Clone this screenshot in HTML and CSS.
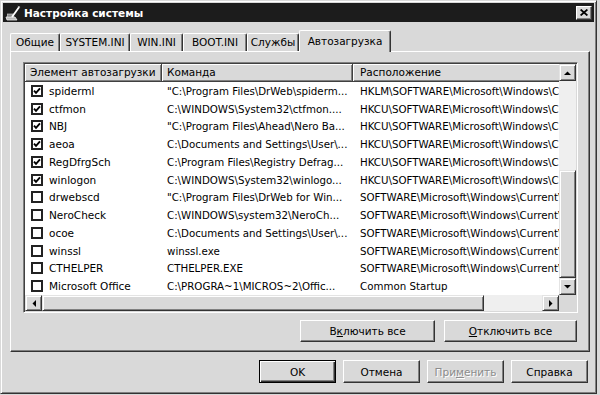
FILE: index.html
```html
<!DOCTYPE html>
<html lang="ru">
<head>
<meta charset="utf-8">
<title>Настройка системы</title>
<link rel="stylesheet" href="styles.css">
</head>
<body>
<div class="window">
  <div class="titlebar">
    <svg class="appicon" viewBox="0 0 16 16" width="16" height="16">
      <path d="M1 12 L10 12 L12 15 L2 15 Z" fill="#b8b8b8" stroke="#eee" stroke-width="0.8"/>
      <rect x="2.5" y="9" width="6" height="3" fill="#8a8a8a" stroke="#ddd" stroke-width="0.6"/>
      <path d="M7 12 L14.5 1.5" stroke="#fff" stroke-width="1.8"/>
      <path d="M12.8 1.2 L15 3" stroke="#aaa" stroke-width="1"/>
    </svg>
    <span class="title">Настройка системы</span>
    <span class="close">
      <svg viewBox="0 0 8 7" width="8" height="7"><path d="M0.6 0.5 L7.4 6.5 M7.4 0.5 L0.6 6.5" stroke="#000" stroke-width="1.7" fill="none"/></svg>
    </span>
  </div>
  <div class="content">
    <div class="tabs">
      <div class="tab w1">Общие</div>
      <div class="tab w2">SYSTEM.INI</div>
      <div class="tab w3">WIN.INI</div>
      <div class="tab w4">BOOT.INI</div>
      <div class="tab w5">Службы</div>
      <div class="tab active">Автозагрузка</div>
    </div>
    <div class="panel">
      <div class="listview">
        <div class="table">
          <div class="hdr c1">Элемент автозагрузки</div>
          <div class="hdr c2">Команда</div>
          <div class="hdr c3">Расположение</div>

          <div class="cell c1"><span class="chk on"><svg viewBox="0 0 8 8"><polyline points="1,3.6 3,5.8 7,1.4"/></svg></span>spiderml</div>
          <div class="cell c2">"C:\Program Files\DrWeb\spiderm...</div>
          <div class="cell c3">HKLM\SOFTWARE\Microsoft\Windows\CurrentVersion\Run</div>

          <div class="cell c1"><span class="chk on"><svg viewBox="0 0 8 8"><polyline points="1,3.6 3,5.8 7,1.4"/></svg></span>ctfmon</div>
          <div class="cell c2">C:\WINDOWS\System32\ctfmon....</div>
          <div class="cell c3">HKCU\SOFTWARE\Microsoft\Windows\CurrentVersion\Run</div>

          <div class="cell c1"><span class="chk on"><svg viewBox="0 0 8 8"><polyline points="1,3.6 3,5.8 7,1.4"/></svg></span>NBJ</div>
          <div class="cell c2">"C:\Program Files\Ahead\Nero Ba...</div>
          <div class="cell c3">HKCU\SOFTWARE\Microsoft\Windows\CurrentVersion\Run</div>

          <div class="cell c1"><span class="chk on"><svg viewBox="0 0 8 8"><polyline points="1,3.6 3,5.8 7,1.4"/></svg></span>aeoa</div>
          <div class="cell c2">C:\Documents and Settings\User\...</div>
          <div class="cell c3">HKCU\SOFTWARE\Microsoft\Windows\CurrentVersion\Run</div>

          <div class="cell c1"><span class="chk on"><svg viewBox="0 0 8 8"><polyline points="1,3.6 3,5.8 7,1.4"/></svg></span>RegDfrgSch</div>
          <div class="cell c2">C:\Program Files\Registry Defrag...</div>
          <div class="cell c3">HKCU\SOFTWARE\Microsoft\Windows\CurrentVersion\Run</div>

          <div class="cell c1"><span class="chk on"><svg viewBox="0 0 8 8"><polyline points="1,3.6 3,5.8 7,1.4"/></svg></span>winlogon</div>
          <div class="cell c2">C:\WINDOWS\System32\winlogo...</div>
          <div class="cell c3">HKCU\SOFTWARE\Microsoft\Windows\CurrentVersion\Run</div>

          <div class="cell c1"><span class="chk"></span>drwebscd</div>
          <div class="cell c2">"C:\Program Files\DrWeb for Win...</div>
          <div class="cell c3">SOFTWARE\Microsoft\Windows\CurrentVersion\Run</div>

          <div class="cell c1"><span class="chk"></span>NeroCheck</div>
          <div class="cell c2">C:\WINDOWS\system32\NeroCh...</div>
          <div class="cell c3">SOFTWARE\Microsoft\Windows\CurrentVersion\Run</div>

          <div class="cell c1"><span class="chk"></span>ocoe</div>
          <div class="cell c2">C:\Documents and Settings\User\...</div>
          <div class="cell c3">SOFTWARE\Microsoft\Windows\CurrentVersion\Run</div>

          <div class="cell c1"><span class="chk"></span>winssl</div>
          <div class="cell c2">winssl.exe</div>
          <div class="cell c3">SOFTWARE\Microsoft\Windows\CurrentVersion\Run</div>

          <div class="cell c1"><span class="chk"></span>CTHELPER</div>
          <div class="cell c2">CTHELPER.EXE</div>
          <div class="cell c3">SOFTWARE\Microsoft\Windows\CurrentVersion\Run</div>

          <div class="cell c1"><span class="chk"></span>Microsoft Office</div>
          <div class="cell c2">C:\PROGRA~1\MICROS~2\Offic...</div>
          <div class="cell c3">Common Startup</div>
        </div>
        <div class="vscroll">
          <div class="sbtn"><svg viewBox="0 0 7 4" width="7" height="4"><polygon points="0,4 7,4 3.5,0.5"/></svg></div>
          <div class="track vtrack"></div>
          <div class="thumb vthumb"></div>
          <div class="sbtn"><svg viewBox="0 0 7 4" width="7" height="4"><polygon points="0,0 7,0 3.5,3.5"/></svg></div>
        </div>
        <div class="hscroll">
          <div class="sbtn"><svg viewBox="0 0 4 7" width="4" height="7"><polygon points="4,0 4,7 0.5,3.5"/></svg></div>
          <div class="thumb hthumb"></div>
          <div class="track htrack"></div>
          <div class="sbtn"><svg viewBox="0 0 4 7" width="4" height="7"><polygon points="0,0 0,7 3.5,3.5"/></svg></div>
        </div>
        <div class="corner"></div>
      </div>
      <div class="panel-buttons">
        <button class="btn wide1">В<u>к</u>лючить все</button>
        <button class="btn wide2"><u>О</u>тключить все</button>
      </div>
    </div>
    <div class="dialog-buttons">
      <button class="btn dlg default">OK</button>
      <button class="btn dlg">Отмена</button>
      <button class="btn dlg disabled">При<u>м</u>енить</button>
      <button class="btn dlg">Справка</button>
    </div>
  </div>
</div>
</body>
</html>
```
FILE: styles.css
```css
html, body {
  margin: 0;
  padding: 0;
  background: #d9d9d9;
}

body {
  font-family: "DejaVu Sans", "Liberation Sans", sans-serif;
  font-size: 10.5px;
  color: #000;
}

.window {
  width: 597px;
  height: 394px;
  box-sizing: border-box;
  border: 1px solid;
  border-color: #d9d9d9 #333 #333 #d9d9d9;
  box-shadow: inset 1px 1px #fff, inset -1px -1px #808080;
  padding: 2px;
  background: #d9d9d9;
  display: flex;
  flex-direction: column;
}

/* title bar */
.titlebar {
  height: 19px;
  background: #1c1c1c;
  display: flex;
  align-items: center;
  padding-left: 2px;
}

.appicon {
  flex: none;
}

.title {
  margin-left: 3px;
  color: #fff;
  font-weight: bold;
  font-size: 10.5px;
  flex: 1;
}

.close {
  width: 16px;
  height: 14px;
  box-sizing: border-box;
  margin-right: 2px;
  background: #d9d9d9;
  border: 1px solid;
  border-color: #fff #333 #333 #fff;
  box-shadow: inset -1px -1px #808080;
  display: flex;
  align-items: center;
  justify-content: center;
}

.close svg {
  display: block;
}

/* content */
.content {
  padding: 8px 4px 0 7px;
  display: flex;
  flex-direction: column;
}

.tabs {
  height: 21px;
  display: flex;
  align-items: flex-end;
}

.tab {
  height: 18px;
  box-sizing: border-box;
  border-top: 1px solid #fff;
  border-left: 1px solid #fff;
  border-right: 1px solid #333;
  box-shadow: inset -1px 0 #808080;
  border-radius: 2px 2px 0 0;
  text-align: center;
  line-height: 17px;
  white-space: nowrap;
}

.w1 { width: 50px; }
.w2 { width: 70px; }
.w3 { width: 53px; }
.w4 { width: 64px; }
.w5 { width: 52px; }

.tab.active {
  width: 92px;
  height: 22px;
  margin-bottom: -1px;
  line-height: 20px;
  background: #d9d9d9;
  position: relative;
  z-index: 1;
}

.panel {
  width: 580px;
  height: 301px;
  box-sizing: border-box;
  border: 1px solid;
  border-color: #fff #333 #333 #fff;
  box-shadow: inset -1px -1px #808080;
  padding: 10px 11px 0 12px;
}

/* list view */
.listview {
  width: 555px;
  height: 251px;
  box-sizing: border-box;
  border: 1px solid;
  border-color: #808080 #fff #fff #808080;
  box-shadow: inset 1px 1px #404040, inset -1px -1px #d9d9d9;
  padding: 1px;
  display: grid;
  grid-template-columns: 534px 17px;
  grid-template-rows: 231px 16px;
  background: #fff;
}

.table {
  overflow: hidden;
  display: grid;
  grid-template-columns: 137px 191px 320px;
  grid-template-rows: 18px repeat(12, 17.75px);
  background: #fff;
}

.hdr {
  box-sizing: border-box;
  background: #d9d9d9;
  border-right: 1px solid #404040;
  border-bottom: 1px solid #404040;
  box-shadow: inset 1px 1px #fff, inset -1px -1px #808080;
  line-height: 17px;
  padding-left: 5px;
  white-space: nowrap;
  overflow: hidden;
}

.hdr.c3 {
  padding-left: 7px;
}

.cell {
  font-size: 10.25px;
  white-space: nowrap;
  overflow: hidden;
  display: flex;
  align-items: center;
  padding-left: 5px;
}

.cell.c1 {
  font-size: 10.5px;
  padding-left: 6px;
  gap: 6px;
}

.cell.c3 {
  padding-left: 7px;
}

.chk {
  flex: none;
  width: 12px;
  height: 12px;
  box-sizing: border-box;
  border: 2px solid #222;
  background: #fff;
  display: flex;
}

.chk svg {
  width: 8px;
  height: 8px;
  fill: none;
  stroke: #000;
  stroke-width: 1.9;
}

/* scrollbars */
.vscroll {
  display: flex;
  flex-direction: column;
}

.hscroll {
  display: flex;
}

.sbtn, .thumb {
  box-sizing: border-box;
  background: #d9d9d9;
  border: 1px solid;
  border-color: #e4e4e4 #333 #333 #e4e4e4;
  box-shadow: inset 1px 1px #fff, inset -1px -1px #808080;
}

.sbtn {
  flex: none;
  display: flex;
  align-items: center;
  justify-content: center;
}

.vscroll .sbtn {
  height: 17px;
}

.hscroll .sbtn {
  width: 17px;
}

.sbtn svg {
  display: block;
  fill: #000;
}

.track {
  background: #efefef;
  flex: 1;
}

.vthumb {
  height: 108px;
  flex: none;
}

.hthumb {
  width: 442px;
  flex: none;
}

.corner {
  background: #d9d9d9;
}

/* buttons */
.btn {
  font-family: inherit;
  font-size: 10.5px;
  color: #000;
  background: #d9d9d9;
  border: 1px solid;
  border-color: #fff #333 #333 #fff;
  box-shadow: inset -1px -1px #808080;
  padding: 0;
  margin: 0;
  box-sizing: border-box;
}

.btn u {
  text-decoration: underline;
}

.panel-buttons {
  display: flex;
  justify-content: flex-end;
  gap: 9px;
  margin-top: 7px;
  margin-right: 1px;
}

.wide1 {
  width: 135px;
  height: 22px;
}

.wide2 {
  width: 133px;
  height: 22px;
}

.dialog-buttons {
  display: flex;
  justify-content: flex-end;
  gap: 7px;
  margin-top: 8px;
  margin-right: 2px;
}

.dlg {
  width: 77px;
  height: 23px;
}

.dlg.default {
  border: 1px solid #000;
  box-shadow: inset 1px 1px #fff, inset -1px -1px #333, inset -2px -2px #808080;
}

.dlg.disabled {
  color: #8c8c8c;
  text-shadow: 1px 1px #fff;
}
```
